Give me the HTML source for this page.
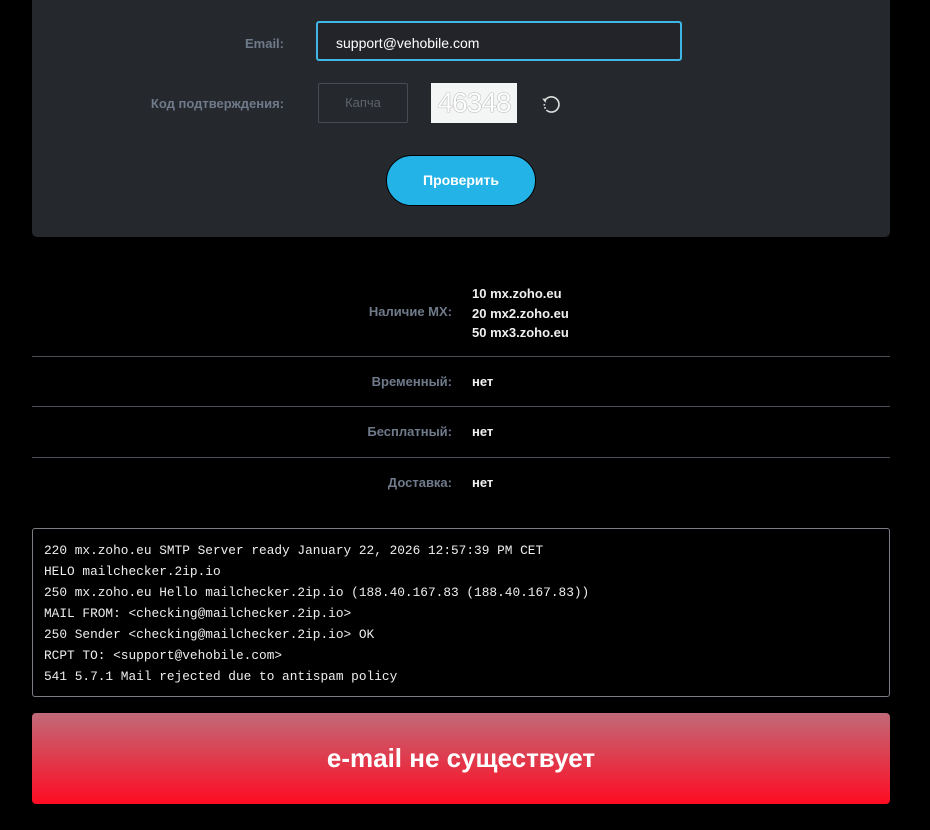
<!DOCTYPE html>
<html><head><meta charset="utf-8"><style>
body{margin:0;background:#000;width:930px;height:830px;overflow:hidden;font-family:"Liberation Sans",sans-serif;position:relative}
.panel{position:absolute;left:32px;top:0;width:858px;height:237px;background:#25282d;border-radius:0 0 5px 5px}
.lbl{position:absolute;color:#6f7a8a;font-size:13px;font-weight:bold;text-align:right}
.email{position:absolute;left:316px;top:21px;width:366px;height:40px;border:2px solid #3fb6e4;border-radius:3px;background:#222429;box-sizing:border-box}
.email span{position:absolute;left:18px;top:12px;color:#fff;font-size:14px}
.cap{position:absolute;left:318px;top:83px;width:90px;height:40px;border:1px solid #474b52;box-sizing:border-box;color:#5e636b;font-size:13px;text-align:center;line-height:38px;border-radius:2px}
.img{position:absolute;left:431px;top:83px;width:86px;height:40px;background:#f4f6f5;color:#fff;font-size:28px;line-height:40px;text-align:center;letter-spacing:-1px;text-shadow:0 0 1px #444}
.btn{position:absolute;left:386px;top:155px;width:150px;height:51px;border-radius:26px;background:#23b3e6;border:1px solid #000;box-sizing:border-box;color:#fff;font-weight:bold;font-size:14px;text-align:center;line-height:49px}
.row{position:absolute;left:32px;width:858px;border-top:1px solid #4a4e55}
.k{position:absolute;right:478px;color:#6f7a8a;font-size:13px;font-weight:bold}
.v{position:absolute;left:472px;color:#f0f0f0;font-size:13px;font-weight:bold}
.log{position:absolute;left:32px;top:528px;width:858px;height:169px;border:1px solid #7a7e84;border-radius:3px;box-sizing:border-box;padding:11px 11px;font-family:"Liberation Mono",monospace;font-size:12.8px;line-height:21px;color:#eee;white-space:pre}
.bad{position:absolute;left:32px;top:713px;width:858px;height:91px;border-radius:4px;background:linear-gradient(#c06a78,#ff0b22);color:#fff;font-size:26px;font-weight:bold;text-align:center;line-height:90px}
</style></head><body>
<div class="panel"></div>
<div class="lbl" style="right:646px;top:36px">Email:</div>
<div class="email"><span>support@vehobile.com</span></div>
<div class="lbl" style="right:646px;top:96px">Код подтверждения:</div>
<div class="cap">Капча</div>
<div class="img">46348</div>
<svg style="position:absolute;left:539px;top:91px" width="26" height="26" viewBox="0 0 24 24"><path d="M6 8A7 7 0 1 1 8 18.5" fill="none" stroke="#ddd" stroke-width="1.5"/><path d="M8 18.5A7 7 0 0 1 5 12" fill="none" stroke="#ddd" stroke-width="1.5" stroke-dasharray="1.5 1.5"/><path d="M3 7l4 0 -1 4z" fill="#ddd"/></svg>
<div class="btn">Проверить</div>
<div class="k" style="top:304px">Наличие MX:</div>
<div class="v" style="top:284px;line-height:19.5px">10 mx.zoho.eu<br>20 mx2.zoho.eu<br>50 mx3.zoho.eu</div>
<div class="row" style="top:356px"></div>
<div class="k" style="top:374px">Временный:</div><div class="v" style="top:374px">нет</div>
<div class="row" style="top:406px"></div>
<div class="k" style="top:424px">Бесплатный:</div><div class="v" style="top:424px">нет</div>
<div class="row" style="top:457px"></div>
<div class="k" style="top:475px">Доставка:</div><div class="v" style="top:475px">нет</div>
<div class="log">220 mx.zoho.eu SMTP Server ready January 22, 2026 12:57:39 PM CET
HELO mailchecker.2ip.io
250 mx.zoho.eu Hello mailchecker.2ip.io (188.40.167.83 (188.40.167.83))
MAIL FROM: &lt;checking@mailchecker.2ip.io&gt;
250 Sender &lt;checking@mailchecker.2ip.io&gt; OK
RCPT TO: &lt;support@vehobile.com&gt;
541 5.7.1 Mail rejected due to antispam policy</div>
<div class="bad">e-mail не существует</div>
</body></html>
